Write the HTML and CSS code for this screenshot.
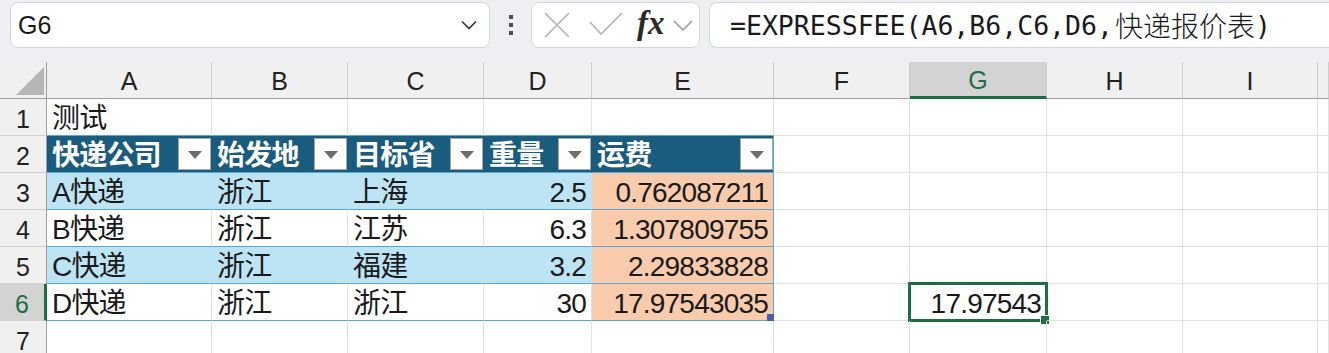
FILE: index.html
```html
<!DOCTYPE html>
<html lang="zh-CN">
<head>
    <meta charset="UTF-8">
    <meta name="viewport" content="width=device-width, initial-scale=1.0">
    <title>快递报价表</title>
    <link rel="stylesheet" href="styles.css">
</head>
<body>
    <div class="toolbar">
        <div class="namebox">
            <span>G6</span>
            <svg class="chev" width="16" height="10" viewBox="0 0 16 10"><path d="M1 1.5 L8 8.5 L15 1.5" fill="none" stroke="#333" stroke-width="1.6"/></svg>
        </div>
        <div class="grip"><i></i><i></i><i></i></div>
        <div class="fx-buttons">
            <svg width="26" height="26" viewBox="0 0 26 26"><path d="M1 1 L25 25 M25 1 L1 25" stroke="#b4b4b4" stroke-width="1.6"/></svg>
            <svg width="34" height="24" viewBox="0 0 34 24"><path d="M1 10 L12 22 L33 1" fill="none" stroke="#b4b4b4" stroke-width="1.6"/></svg>
            <span class="fx">fx</span>
            <svg width="20" height="11" viewBox="0 0 20 11"><path d="M1 1 L10 10 L19 1" fill="none" stroke="#9a9a9a" stroke-width="1.5"/></svg>
        </div>
        <div class="formula">=EXPRESSFEE(A6,B6,C6,D6,<span class="cjk">快递报价表</span>)</div>
    </div>

    <div class="sheet">
        <!-- column headers -->
        <div class="c corner"><span class="tri"></span></div>
        <div class="c ch">A</div>
        <div class="c ch">B</div>
        <div class="c ch">C</div>
        <div class="c ch">D</div>
        <div class="c ch">E</div>
        <div class="c ch">F</div>
        <div class="c ch active">G</div>
        <div class="c ch">H</div>
        <div class="c ch">I</div>
        <div class="c ch"></div>

        <!-- row 1 -->
        <div class="c rh">1</div>
        <div class="c ttop">测试</div>
        <div class="c ttop"></div>
        <div class="c ttop"></div>
        <div class="c ttop"></div>
        <div class="c ttop"></div>
        <div class="c"></div>
        <div class="c"></div>
        <div class="c"></div>
        <div class="c"></div>
        <div class="c"></div>

        <!-- row 2: table header -->
        <div class="c rh">2</div>
        <div class="c th"><span>快递公司</span><span class="drop"></span></div>
        <div class="c th"><span>始发地</span><span class="drop"></span></div>
        <div class="c th"><span>目标省</span><span class="drop"></span></div>
        <div class="c th"><span>重量</span><span class="drop"></span></div>
        <div class="c th last"><span>运费</span><span class="drop"></span></div>
        <div class="c"></div>
        <div class="c"></div>
        <div class="c"></div>
        <div class="c"></div>
        <div class="c"></div>

        <!-- row 3 -->
        <div class="c rh">3</div>
        <div class="c band">A快递</div>
        <div class="c band">浙江</div>
        <div class="c band">上海</div>
        <div class="c band num">2.5</div>
        <div class="c fee num">0.762087211</div>
        <div class="c"></div>
        <div class="c"></div>
        <div class="c"></div>
        <div class="c"></div>
        <div class="c"></div>

        <!-- row 4 -->
        <div class="c rh">4</div>
        <div class="c tw">B快递</div>
        <div class="c tw">浙江</div>
        <div class="c tw">江苏</div>
        <div class="c tw num">6.3</div>
        <div class="c fee num">1.307809755</div>
        <div class="c"></div>
        <div class="c"></div>
        <div class="c"></div>
        <div class="c"></div>
        <div class="c"></div>

        <!-- row 5 -->
        <div class="c rh">5</div>
        <div class="c band">C快递</div>
        <div class="c band">浙江</div>
        <div class="c band">福建</div>
        <div class="c band num">3.2</div>
        <div class="c fee num">2.29833828</div>
        <div class="c"></div>
        <div class="c"></div>
        <div class="c"></div>
        <div class="c"></div>
        <div class="c"></div>

        <!-- row 6 -->
        <div class="c rh active">6</div>
        <div class="c tw">D快递</div>
        <div class="c tw">浙江</div>
        <div class="c tw">浙江</div>
        <div class="c tw num">30</div>
        <div class="c fee num table-end">17.97543035</div>
        <div class="c"></div>
        <div class="c num selected">17.97543</div>
        <div class="c"></div>
        <div class="c"></div>
        <div class="c"></div>

        <!-- row 7 -->
        <div class="c rh">7</div>
        <div class="c"></div>
        <div class="c"></div>
        <div class="c"></div>
        <div class="c"></div>
        <div class="c"></div>
        <div class="c"></div>
        <div class="c"></div>
        <div class="c"></div>
        <div class="c"></div>
        <div class="c"></div>
    </div>
</body>
</html>
```

FILE: styles.css
```css
body {
    margin: 0;
    padding: 0;
    width: 1329px;
    height: 353px;
    overflow: hidden;
    background-color: white;
    font-family: "Liberation Sans", "Noto Sans CJK SC", sans-serif;
    color: #1a1a1a;
}

/* formula bar */
.toolbar {
    display: flex;
    align-items: flex-start;
    height: 62px;
    box-sizing: border-box;
    padding: 2px 0 0 10px;
    background-color: #edeff2;
}

.namebox {
    width: 480px;
    height: 46px;
    box-sizing: border-box;
    display: flex;
    align-items: center;
    justify-content: space-between;
    padding: 0 12px 0 7px;
    background-color: white;
    border: 1px solid #d4d7db;
    border-radius: 8px;
    font-size: 25px;
}

.grip {
    width: 41px;
    height: 46px;
    display: flex;
    flex-direction: column;
    align-items: center;
    justify-content: center;
    gap: 4px;
}

.grip i {
    display: block;
    width: 4px;
    height: 4px;
    background-color: #505050;
}

.fx-buttons {
    width: 169px;
    height: 46px;
    box-sizing: border-box;
    display: flex;
    align-items: center;
    padding-left: 12px;
    background-color: white;
    border: 1px solid #d4d7db;
    border-radius: 8px;
}

.fx-buttons svg:nth-child(1) {
    margin-right: 19px;
}

.fx-buttons svg:nth-child(2) {
    margin-right: 14px;
    margin-top: -2px;
}

.fx {
    font-family: "Liberation Serif", serif;
    font-style: italic;
    font-weight: bold;
    font-size: 33px;
    color: #2a2a2a;
    margin-right: 8px;
    margin-top: -3px;
}

.formula {
    flex: 1;
    height: 46px;
    box-sizing: border-box;
    margin-left: 9px;
    padding-left: 20px;
    display: flex;
    align-items: center;
    background-color: white;
    border: 1px solid #d4d7db;
    border-right: none;
    border-radius: 8px 0 0 8px;
    font-family: "DejaVu Sans Mono", "Noto Sans CJK SC", monospace;
    font-size: 26.5px;
    white-space: nowrap;
}

.formula .cjk {
    font-family: "Noto Sans CJK SC", sans-serif;
    font-size: 28px;
    font-weight: 300;
    margin-left: 2px;
}

/* grid */
.sheet {
    display: grid;
    grid-template-columns: 47px 165px 136px 136px 108px 182px 136px 137px 136px 135px 1fr;
    grid-auto-rows: 37px;
}

.c {
    box-sizing: border-box;
    border-right: 1px solid #e1e1e1;
    border-bottom: 1px solid #e1e1e1;
    display: flex;
    align-items: center;
    padding-left: 5px;
    padding-top: 4px;
    font-size: 28px;
    letter-spacing: -0.8px;
    line-height: 1;
    white-space: nowrap;
    position: relative;
}

.num {
    justify-content: flex-end;
    padding-right: 5px;
}

.ch {
    background-color: #f0f0f0;
    border-right-color: #cdcdcd;
    border-bottom-color: #9e9e9e;
    justify-content: center;
    padding-left: 0;
    padding-top: 3px;
    font-size: 25px;
    letter-spacing: 0;
    color: #222;
}

.rh {
    background-color: #f0f0f0;
    border-right-color: #9e9e9e;
    border-bottom-color: #d2d2d2;
    justify-content: center;
    padding-left: 0;
    font-size: 25px;
    letter-spacing: 0;
    color: #222;
}

.ch.active {
    background-color: #d3d3d3;
    color: #1e6e42;
    border-bottom: 3px solid #1e6e42;
}

.rh.active {
    background-color: #d3d3d3;
    color: #1e6e42;
    border-right: 3px solid #1e6e42;
}

.corner {
    background-color: #f0f0f0;
    border-right-color: #9e9e9e;
    border-bottom-color: #9e9e9e;
}

.corner .tri {
    position: absolute;
    right: 2px;
    bottom: 3px;
    width: 0;
    height: 0;
    border-left: 28px solid transparent;
    border-bottom: 28px solid #b6b6b6;
}

/* table */
.ttop {
    border-bottom-color: #5aa8d8;
}

.th {
    background-color: #1a5c7e;
    border-right-color: #1a5c7e;
    border-bottom-color: #5aa8d8;
    color: white;
    font-weight: bold;
    justify-content: space-between;
    padding-right: 0;
    padding-top: 0;
}

.th span:first-child {
    margin-top: 3px;
}

.th.last {
    border-right-color: #5aa8d8;
}

.drop {
    width: 33px;
    height: 32px;
    box-sizing: border-box;
    background-color: white;
    border: 1px solid #a6a6a6;
    display: flex;
    align-items: center;
    justify-content: center;
}

.drop::before {
    content: "";
    border-left: 7px solid transparent;
    border-right: 7px solid transparent;
    border-top: 8px solid #6e6e6e;
    margin-top: 2px;
}

.band {
    background-color: #bde4f5;
    border-right-color: #bde4f5;
    border-bottom-color: #5aa8d8;
}

.tw {
    border-bottom-color: #5aa8d8;
}

.fee {
    background-color: #f8cbad;
    border-right-color: #5aa8d8;
    border-bottom-color: #5aa8d8;
}

.table-end::after {
    content: "";
    position: absolute;
    right: -1px;
    bottom: -1px;
    width: 7px;
    height: 7px;
    background-color: #4b59b5;
}

/* selected cell */
.selected::before {
    content: "";
    position: absolute;
    left: -2px;
    top: -2px;
    right: -2px;
    bottom: -2px;
    border: 3px solid #1e6e42;
}

.selected::after {
    content: "";
    position: absolute;
    right: -3px;
    bottom: -4px;
    width: 8px;
    height: 8px;
    background-color: #1e6e42;
    outline: 1px solid white;
}
```
